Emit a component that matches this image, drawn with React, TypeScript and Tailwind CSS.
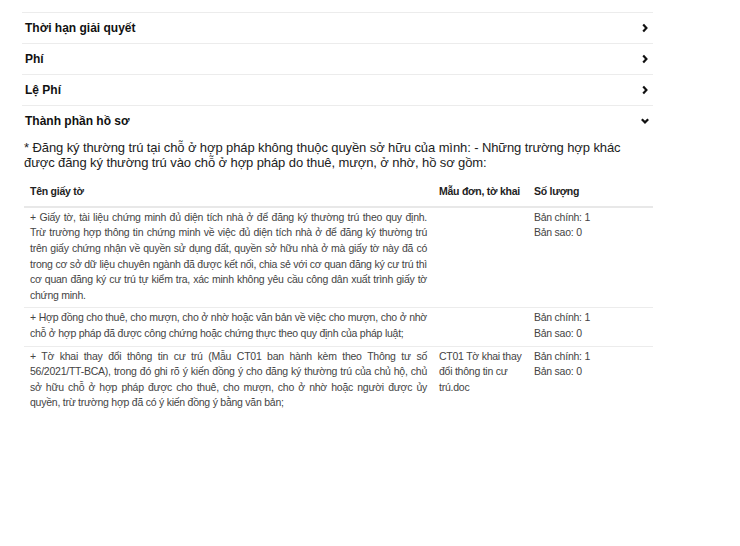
import type { ReactNode } from "react";

type Section = {
  title: string;
  open?: boolean;
};

type DocRow = {
  name: string;
  form: string;
  quantity: string[];
};

const sections: Section[] = [
  { title: "Thời hạn giải quyết" },
  { title: "Phí" },
  { title: "Lệ Phí" },
  { title: "Thành phần hồ sơ", open: true },
];

const rows: DocRow[] = [
  {
    name: "+ Giấy tờ, tài liệu chứng minh đủ diện tích nhà ở để đăng ký thường trú theo quy định. Trừ trường hợp thông tin chứng minh về việc đủ diện tích nhà ở để đăng ký thường trú trên giấy chứng nhận về quyền sử dụng đất, quyền sở hữu nhà ở mà giấy tờ này đã có trong cơ sở dữ liệu chuyên ngành đã được kết nối, chia sẻ với cơ quan đăng ký cư trú thì cơ quan đăng ký cư trú tự kiểm tra, xác minh không yêu cầu công dân xuất trình giấy tờ chứng minh.",
    form: "",
    quantity: ["Bản chính: 1", "Bản sao: 0"],
  },
  {
    name: "+ Hợp đồng cho thuê, cho mượn, cho ở nhờ hoặc văn bản về việc cho mượn, cho ở nhờ chỗ ở hợp pháp đã được công chứng hoặc chứng thực theo quy định của pháp luật;",
    form: "",
    quantity: ["Bản chính: 1", "Bản sao: 0"],
  },
  {
    name: "+ Tờ khai thay đổi thông tin cư trú (Mẫu CT01 ban hành kèm theo Thông tư số 56/2021/TT-BCA), trong đó ghi rõ ý kiến đồng ý cho đăng ký thường trú của chủ hộ, chủ sở hữu chỗ ở hợp pháp được cho thuê, cho mượn, cho ở nhờ hoặc người được ủy quyền, trừ trường hợp đã có ý kiến đồng ý bằng văn bản;",
    form: "CT01 Tờ khai thay đổi thông tin cư trú.doc",
    quantity: ["Bản chính: 1", "Bản sao: 0"],
  },
];

const Chevron = ({ open }: { open?: boolean }) => (
  <svg width="10" height="10" viewBox="0 0 10 10" className="text-[#111]">
    {open ? (
      <polyline points="1.8,3.2 5,6.4 8.2,3.2" fill="none" stroke="currentColor" strokeWidth="2.2" />
    ) : (
      <polyline points="3.2,1.6 6.4,5 3.2,8.4" fill="none" stroke="currentColor" strokeWidth="2.2" />
    )}
  </svg>
);

const SectionRow = ({ section, children }: { section: Section; children?: ReactNode }) => (
  <div className="border-t border-[#ececec]">
    <div className="flex h-[30px] items-center justify-between pl-[3px] pr-[3px]">
      <h3 className="text-[12px] font-bold text-[#111]">{section.title}</h3>
      <Chevron open={section.open} />
    </div>
    {section.open ? children : null}
  </div>
);

export default function App() {
  return (
    <div className="min-h-screen bg-white font-['Liberation_Sans',Arial,sans-serif]">
      <main className="ml-[22px] w-[631px] pt-[12px]">
        {sections.map((section) => (
          <SectionRow key={section.title} section={section}>
            <div className="pt-[4px] pl-[2px]">
              <p className="pr-[6px] text-[13px] leading-[15px] tracking-[-0.1px] text-[#222]">
                * Đăng ký thường trú tại chỗ ở hợp pháp không thuộc quyền sở hữu của mình: - Những trường hợp khác được đăng ký thường trú vào chỗ ở hợp pháp do thuê, mượn, ở nhờ, hồ sơ gồm:
              </p>
              <table className="mt-[4px] w-full border-collapse text-[10.5px] tracking-[-0.245px] text-[#444]">
                <thead>
                  <tr className="border-b-2 border-[#e8e8e8] text-left">
                    <th className="w-[409px] px-[6px] pt-[10px] pb-[6px] font-bold text-[#222]">Tên giấy tờ</th>
                    <th className="w-[95px] whitespace-nowrap px-[6px] pt-[10px] pb-[6px] font-bold text-[#222]">
                      Mẫu đơn, tờ khai
                    </th>
                    <th className="px-[6px] pt-[10px] pb-[6px] font-bold text-[#222]">Số lượng</th>
                  </tr>
                </thead>
                <tbody>
                  {rows.map((row, index) => (
                    <tr
                      key={index}
                      className={index < rows.length - 1 ? "border-b border-[#ececec] align-top" : "align-top"}
                    >
                      <td className="px-[6px] pt-[2px] pb-[4px] text-justify leading-[15.6px]">{row.name}</td>
                      <td className="px-[6px] pt-[2px] pb-[4px] leading-[15.6px]">{row.form}</td>
                      <td className="px-[6px] pt-[2px] pb-[4px] leading-[15.6px]">
                        {row.quantity.map((line) => (
                          <div key={line}>{line}</div>
                        ))}
                      </td>
                    </tr>
                  ))}
                </tbody>
              </table>
            </div>
          </SectionRow>
        ))}
      </main>
    </div>
  );
}
